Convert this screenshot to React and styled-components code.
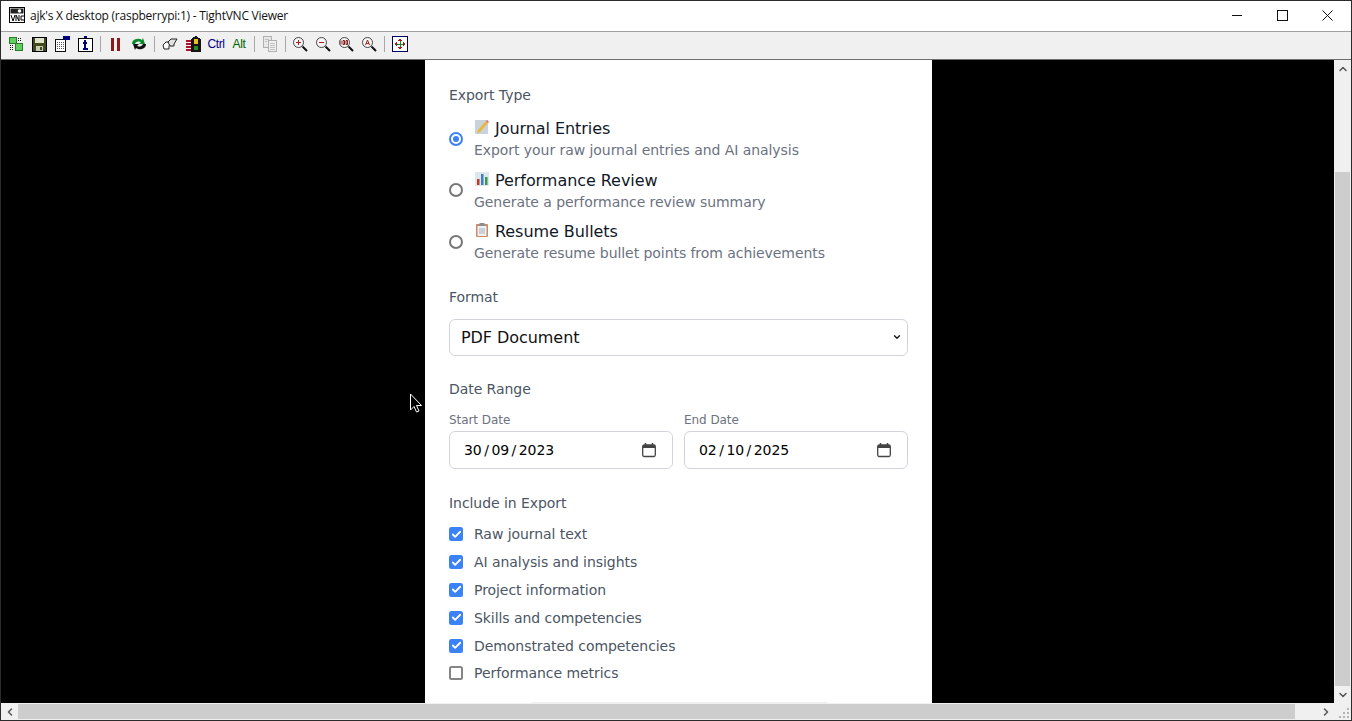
import React from "react";
import styled, { createGlobalStyle } from "styled-components";
import { ChevronDown, ChevronUp, ChevronLeft, ChevronRight, Check } from "lucide-react";

const GlobalStyle = createGlobalStyle`
  html, body {
    margin: 0;
    padding: 0;
    height: 100%;
    overflow: hidden;
  }
  * { box-sizing: border-box; }
  #root { height: 100%; }
`;

const Window = styled.div`
  width: 1352px;
  height: 721px;
  display: flex;
  flex-direction: column;
  background: #f0f0f0;
  border: 1px solid #2b2b2b;
  overflow: hidden;
  font-family: "DejaVu Sans", sans-serif;
`;

const TitleBar = styled.div`
  height: 31px;
  flex: none;
  display: flex;
  align-items: center;
  background: #fff;
  padding: 0 1px 2px 8px;
  border-bottom: 1px solid #a0a0a0;
`;

const Title = styled.span`
  font: 12px "Open Sans", "Liberation Sans", sans-serif;
  letter-spacing: -0.25px;
  color: #111;
  margin-left: 5px;
  flex: 1;
`;

const WinButton = styled.div`
  width: 45px;
  height: 28px;
  display: flex;
  align-items: center;
  justify-content: center;
  color: #111;
`;

const Toolbar = styled.div`
  height: 28px;
  flex: none;
  display: flex;
  align-items: center;
  padding: 0 0 3px 3.5px;
  background: #f0f0f0;
  border-bottom: 1px solid #6e6e6e;
`;

const Tool = styled.div`
  width: 23px;
  height: 22px;
  display: flex;
  align-items: center;
  justify-content: center;
  font: 12px "Liberation Sans", sans-serif;
  letter-spacing: -0.4px;
  color: ${(p) => p.$color || "#000"};
`;

const Sep = styled.div`
  width: 1px;
  height: 16px;
  margin: 0 ${(p) => (p.$narrow ? 3 : 4)}px 0 3px;
  background: #a8a8a8;
`;

const Main = styled.div`
  flex: 1;
  min-height: 0;
  display: grid;
  grid-template-columns: 1fr 17px;
  grid-template-rows: 1fr 17px;
`;

const Viewport = styled.div`
  background: #000;
  overflow: hidden;
  position: relative;
  padding-left: 424px;
`;

const Cursor = styled.svg`
  position: absolute;
  left: 408px;
  top: 333px;
`;

const Panel = styled.div`
  width: 507px;
  height: 100%;
  background: #fff;
  padding: 25px 24px 0;
  color: #000;
  letter-spacing: -0.06px;
`;

const SectionLabel = styled.div`
  font-size: 14px;
  line-height: 20px;
  font-weight: 400;
  color: #4b5563;
  margin-bottom: ${(p) => p.$gap || 12}px;
`;

const RadioList = styled.div`
  display: flex;
  flex-direction: column;
  gap: 8px;
  margin-bottom: 23px;
`;

const RadioRow = styled.div`
  display: flex;
  align-items: center;
  gap: 11px;
  height: 43.5px;
`;

const Radio = styled.span`
  width: 14px;
  height: 14px;
  flex: none;
  border-radius: 50%;
  border: 2px solid ${(p) => (p.$on ? "#3b82f6" : "#767676")};
  background: #fff;
  display: flex;
  align-items: center;
  justify-content: center;
  &::after {
    content: "";
    width: 6px;
    height: 6px;
    border-radius: 50%;
    background: ${(p) => (p.$on ? "#3b82f6" : "transparent")};
  }
`;

const RadioText = styled.div`
  display: flex;
  flex-direction: column;
`;

const RadioTitle = styled.div`
  font-size: 16px;
  line-height: 24px;
  height: 23px;
  padding-top: 1px;
  color: #111827;
  display: flex;
  align-items: center;
  gap: 5px;
`;

const RadioHint = styled.div`
  font-size: 14px;
  line-height: 20px;
  height: 20px;
  color: #6b7280;
`;

const Emoji = styled.svg`
  width: 16px;
  height: 16px;
  margin-top: -4px;
  flex: none;
`;

const Select = styled.div`
  height: 37px;
  border: 1px solid #d1d5db;
  border-radius: 6px;
  background: #fff;
  display: flex;
  align-items: center;
  justify-content: space-between;
  padding: 0 5px 0 11px;
  font-size: 16px;
  color: #111;
  margin-bottom: 23px;
`;

const DateGrid = styled.div`
  display: grid;
  grid-template-columns: 1fr 1fr;
  gap: 11px;
  margin-bottom: 24px;
`;

const DateLabel = styled.div`
  font-size: 12px;
  line-height: 16px;
  color: #6b7280;
  margin-bottom: 3px;
`;

const DateBox = styled.div`
  height: 38px;
  border: 1px solid #d1d5db;
  border-radius: 6px;
  display: flex;
  align-items: center;
  justify-content: space-between;
  padding: 0 15px 0 14px;
  font-size: 14px;
  color: #000;
`;

const DateValue = styled.span`
  display: flex;
  gap: 2.5px;
`;

const CheckList = styled.div`
  display: flex;
  flex-direction: column;
  gap: 8px;
`;

const CheckRow = styled.div`
  display: flex;
  align-items: center;
  gap: 11px;
  height: 19.8px;
  font-size: 14px;
  line-height: 20px;
  color: #4b5563;
`;

const CheckBox = styled.span`
  width: 14px;
  height: 14px;
  flex: none;
  border-radius: 2.5px;
  display: flex;
  align-items: center;
  justify-content: center;
  background: ${(p) => (p.$on ? "#3b82f6" : "#fff")};
  border: ${(p) => (p.$on ? "none" : "2px solid #858585")};
  color: #fff;
`;

const SubmitEdge = styled.div`
  width: 304px;
  height: 40px;
  margin: 19px auto 0;
  border-radius: 6px;
  background: #eceef1;
`;

const Track = styled.div`
  background: #f0f0f0;
  display: flex;
  flex-direction: ${(p) => (p.$horizontal ? "row" : "column")};
  align-items: center;
  color: #555;
`;

const VThumb = styled.div`
  width: 15px;
  flex: 1;
  margin-top: 95px;
  background: #cdcdcd;
`;

const HThumb = styled.div`
  height: 15px;
  width: 1277px;
  flex: none;
  background: #cdcdcd;
`;

const Arrow = styled.div`
  flex: none;
  width: 17px;
  height: 17px;
  display: flex;
  align-items: center;
  justify-content: center;
  margin-left: ${(p) => (p.$end ? "auto" : "0")};
`;

const Corner = styled.div`
  background: #f0f0f0;
  display: flex;
  align-items: flex-end;
  justify-content: flex-end;
`;

const MagnifierKinds = ["+", "-", "100", "A"];

const tools = [
  <svg width="16" height="16" viewBox="0 0 16 16" key="conn" shapeRendering="crispEdges">
    <rect x="1" y="1" width="7" height="6" fill="#5fd05f" stroke="#2a7a2a" />
    <rect x="7" y="7" width="7" height="7" fill="#5fd05f" stroke="#2a7a2a" />
    <path d="M2 9h3M2 11h3M2 13h3M10 2h4M10 4h4" stroke="#111" strokeDasharray="1 1" />
  </svg>,
  <svg width="15" height="15" viewBox="0 0 15 15" key="save" shapeRendering="crispEdges">
    <rect x="0.5" y="0.5" width="14" height="14" fill="#3f4a1e" stroke="#000" />
    <rect x="3" y="1" width="9" height="5" fill="#dfe3c8" />
    <rect x="4" y="9" width="7" height="5" fill="#c8ccb0" />
    <rect x="8" y="10" width="2" height="3" fill="#3f4a1e" />
  </svg>,
  <svg width="16" height="16" viewBox="0 0 16 16" key="opts" shapeRendering="crispEdges">
    <path d="M1.5 3.5h10v12h-10z" fill="#fff" stroke="#111" />
    <path d="M3 6h7M3 8h7M3 10h7M3 12h7" stroke="#555" strokeDasharray="1 1" />
    <rect x="9" y="0" width="7" height="4" fill="#000080" />
  </svg>,
  <svg width="15" height="16" viewBox="0 0 15 16" key="info" shapeRendering="crispEdges">
    <path d="M0.5 2.500h14v13h-14z" fill="#fff" stroke="#000" />
    <rect x="6" y="0" width="3" height="2" fill="#000080" />
    <path d="M5 7h4M7 7v6M5 13h5" stroke="#000080" strokeWidth="1.500" />
    <rect x="6" y="4" width="2" height="2" fill="#000080" />
  </svg>,
  "sep",
  <svg width="12" height="14" viewBox="0 0 12 14" key="pause" shapeRendering="crispEdges">
    <rect x="1" y="1" width="3" height="13" fill="#8b1a1a" />
    <rect x="7" y="1" width="3" height="13" fill="#8b1a1a" />
  </svg>,
  <svg width="16" height="14" viewBox="0 0 16 14" key="refresh">
    <path d="M1 7a6 5 0 0 1 10-4l1-2 2 6H8l2-2a4 3 0 0 0-6 2z" fill="#0a8a2a" />
    <path d="M15 7a6 5 0 0 1-10 4l-1 2-2-6h6l-2 2a4 3 0 0 0 6-2z" fill="#111" />
  </svg>,
  "sep",
  <svg width="16" height="12" viewBox="0 0 16 12" key="keys">
    <path d="M1 7l3-3h5L7 8v3H2z" fill="#fff" stroke="#222" />
    <path d="M6 4l3-3h6l-3 5v2H8z" fill="#e2e2e2" stroke="#222" />
  </svg>,
  <svg width="16" height="16" viewBox="0 0 16 16" key="sas" shapeRendering="crispEdges">
    <path d="M6 3l5-3 5 3v13H6z" fill="#141414" />
    <path d="M9 3h4v5H9z" fill="#e8c020" />
    <path d="M9 10h4v4H9z" fill="#2a8a2a" />
    <path d="M1 5h5M1 8h5M1 11h5M1 14h5" stroke="#b01030" strokeWidth="1.500" />
  </svg>,
  <span key="ctrl" data-color="#000080">Ctrl</span>,
  <span key="alt" data-color="#006400">Alt</span>,
  "sep",
  <svg width="16" height="16" viewBox="0 0 16 16" key="copy" shapeRendering="crispEdges">
    <path d="M1.500 0.500h8v11h-8z" fill="#e8e8e8" stroke="#b0b0b0" />
    <path d="M6.500 4.500h8v11h-8z" fill="#f0f0f0" stroke="#b0b0b0" />
    <path d="M3 3h4M3 5h2M8 7h5M8 9h5M8 11h5M8 13h5" stroke="#c0c0c0" />
  </svg>,
  "sepNarrow",
  ...MagnifierKinds.map((k) => (
    <svg width="16" height="16" viewBox="0 0 16 16" key={k}>
      <circle cx="6.500" cy="6.500" r="5" fill="#f6f6f6" stroke="#444" />
      <path d="M10.500 10.500L15 15" stroke="#111" strokeWidth="2" />
      {k === "+" && <path d="M4 6.500h5M6.500 4v5" stroke="#a02020" />}
      {k === "-" && <path d="M4 6.500h5" stroke="#a02020" />}
      {k === "100" && <path d="M3 4.500v4M5 4.500h1.500v4H5zM8 4.500h1.500v4H8z" stroke="#801818" fill="none" />}
      {k === "A" && <path d="M4.500 9l2-5 2 5M5.300 7.500h2.500" stroke="#a02020" fill="none" />}
    </svg>
  )),
  "sep",
  <svg width="16" height="16" viewBox="0 0 16 16" key="full" shapeRendering="crispEdges">
    <rect x="0.500" y="0.500" width="15" height="15" fill="#fff" stroke="#000060" />
    <path d="M8 2l2 3H6zM8 14l2-3H6zM2 8l3-2v4zM14 8l-3-2v4z" fill="#b01818" />
    <path d="M8 5v6M5 8h6" stroke="#0a8a2a" />
  </svg>,
];

const options = [
  { title: "Journal Entries", hint: "Export your raw journal entries and AI analysis", on: true, icon: "memo" },
  { title: "Performance Review", hint: "Generate a performance review summary", icon: "chart" },
  { title: "Resume Bullets", hint: "Generate resume bullet points from achievements", icon: "clip" },
];

const includes = [
  ["Raw journal text", true],
  ["AI analysis and insights", true],
  ["Project information", true],
  ["Skills and competencies", true],
  ["Demonstrated competencies", true],
  ["Performance metrics", false],
];

const OptionIcon = ({ name }) => (
  <Emoji viewBox="0 0 16 16">
    {name === "memo" && (
      <>
        <rect x="1" y="1" width="13" height="14" fill="#c9d3dc" />
        <path d="M4 11L12 2l2 2-8 9-3 1z" fill="#e8b838" />
        <path d="M12 2l2 2 1-1-2-2z" fill="#e0608a" />
      </>
    )}
    {name === "chart" && (
      <>
        <rect x="1" y="1" width="14" height="14" fill="#dfe6ec" />
        <rect x="3" y="8" width="2.500" height="6" fill="#c0392b" />
        <rect x="7" y="3" width="2.500" height="11" fill="#3b7fc4" />
        <rect x="11" y="6" width="2.500" height="8" fill="#3a9a4a" />
      </>
    )}
    {name === "clip" && (
      <>
        <rect x="2" y="2" width="12" height="13" rx="1" fill="#c98a6a" />
        <rect x="3.500" y="4" width="9" height="10" fill="#eef1f3" />
        <rect x="5.500" y="1" width="5" height="3" fill="#8a8f96" />
        <path d="M5 7h6M5 9h6M5 11h6" stroke="#a9b2ba" />
      </>
    )}
  </Emoji>
);

const CalendarGlyph = () => (
  <svg width="16" height="16" viewBox="0 0 16 16" fill="none">
    <rect x="1.700" y="3" width="12.600" height="11.500" rx="1.500" stroke="#444" strokeWidth="1.300" />
    <rect x="2" y="3" width="12" height="3" fill="#444" />
    <path d="M4.500 1v2.500M11.500 1v2.500" stroke="#444" strokeWidth="1.500" />
  </svg>
);

const DateField = ({ parts }) => (
  <DateBox>
    <DateValue>
      <span>{parts[0]}</span>/<span>{parts[1]}</span>/<span>{parts[2]}</span>
    </DateValue>
    <CalendarGlyph />
  </DateBox>
);

export default function App() {
  return (
    <>
      <GlobalStyle />
      <Window>
        <TitleBar>
          <svg width="16" height="16" viewBox="0 0 16 16">
            <rect x="0.500" y="0.500" width="15" height="15" fill="#fff" stroke="#000" />
            <rect x="1.500" y="1.500" width="13" height="5" fill="#222" />
            <circle cx="10.500" cy="4" r="1.800" fill="#fff" />
            <path d="M2 8l2 6 2-6M7 14V8l3 6V8M15 9h-3v4h3" stroke="#000" fill="none" />
          </svg>
          <Title>ajk's X desktop (raspberrypi:1) - TightVNC Viewer</Title>
          <WinButton>
            <svg width="11" height="11" viewBox="0 0 11 11" shapeRendering="crispEdges">
              <path d="M0 5.500h10" stroke="#111" />
            </svg>
          </WinButton>
          <WinButton>
            <svg width="11" height="11" viewBox="0 0 11 11" shapeRendering="crispEdges">
              <rect x="0.500" y="0.500" width="10" height="10" fill="none" stroke="#111" />
            </svg>
          </WinButton>
          <WinButton>
            <svg width="11" height="11" viewBox="0 0 11 11">
              <path d="M0.500 0.500l10 10M10.500 0.500l-10 10" stroke="#111" />
            </svg>
          </WinButton>
        </TitleBar>
        <Toolbar>
          {tools.map((t, i) =>
            t === "sep" || t === "sepNarrow" ? (
              <Sep key={i} $narrow={t === "sepNarrow"} />
            ) : (
              <Tool key={i} $color={t.props["data-color"]}>{t}</Tool>
            )
          )}
        </Toolbar>
        <Main>
          <Viewport>
            <Panel>
              <SectionLabel>Export Type</SectionLabel>
              <RadioList>
                {options.map((o) => (
                  <RadioRow key={o.title}>
                    <Radio $on={o.on} />
                    <RadioText>
                      <RadioTitle>
                        <OptionIcon name={o.icon} />
                        {o.title}
                      </RadioTitle>
                      <RadioHint>{o.hint}</RadioHint>
                    </RadioText>
                  </RadioRow>
                ))}
              </RadioList>
              <SectionLabel>Format</SectionLabel>
              <Select>
                PDF Document
                <ChevronDown size={10} strokeWidth={3} />
              </Select>
              <SectionLabel $gap={13}>Date Range</SectionLabel>
              <DateGrid>
                <div>
                  <DateLabel>Start Date</DateLabel>
                  <DateField parts={["30", "09", "2023"]} />
                </div>
                <div>
                  <DateLabel>End Date</DateLabel>
                  <DateField parts={["02", "10", "2025"]} />
                </div>
              </DateGrid>
              <SectionLabel>Include in Export</SectionLabel>
              <CheckList>
                {includes.map(([label, on]) => (
                  <CheckRow key={label}>
                    <CheckBox $on={on}>{on && <Check size={11} strokeWidth={4} />}</CheckBox>
                    {label}
                  </CheckRow>
                ))}
              </CheckList>
              <SubmitEdge />
            </Panel>
            <Cursor width="16" height="22" viewBox="0 0 16 22">
              <path d="M1.500 1v16l3.500-3.500 2.500 5.500 2.500-1-2.500-5.500h5z" fill="#000" stroke="#fff" />
            </Cursor>
          </Viewport>
          <Track>
            <Arrow><ChevronUp size={12} strokeWidth={3} /></Arrow>
            <VThumb />
            <Arrow><ChevronDown size={12} strokeWidth={3} /></Arrow>
          </Track>
          <Track $horizontal>
            <Arrow><ChevronLeft size={12} strokeWidth={3} /></Arrow>
            <HThumb />
            <Arrow $end><ChevronRight size={12} strokeWidth={3} /></Arrow>
          </Track>
          <Corner>
            <svg width="15" height="15" viewBox="0 0 15 15" shapeRendering="crispEdges">
              <path d="M11 3h2v2h-2zM7 7h2v2H7zM11 7h2v2h-2zM3 11h2v2H3zM7 11h2v2h-2zM11 11h2v2h-2z" fill="#b5b5b5" />
            </svg>
          </Corner>
        </Main>
      </Window>
    </>
  );
}
